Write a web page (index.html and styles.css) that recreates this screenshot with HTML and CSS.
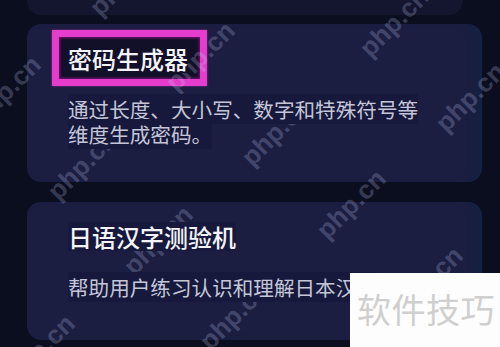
FILE: index.html
```html
<!DOCTYPE html>
<html lang="zh-CN">
<head>
<meta charset="utf-8">
<title>工具列表</title>
<link rel="stylesheet" href="styles.css">
</head>
<body>
<div class="screen">
  <div class="card card-top"></div>
  <div class="card card-first">
    <div class="title title-hl"><span class="tx">密码生成器</span></div>
    <p class="desc"><span class="tx">通过长度、大小写、数字和特殊符号等<br>维度生成密码。</span></p>
  </div>
  <div class="card card-second">
    <div class="title"><span class="tx">日语汉字测验机</span></div>
    <p class="desc"><span class="tx">帮助用户练习认识和理解日本汉字</span></p>
  </div>
  <div class="wm-layer" aria-hidden="true">
    <span class="wm w1">php.cn</span>
    <span class="wm w2">php.cn</span>
    <span class="wm w3">php.cn</span>
    <span class="wm w4">php.cn</span>
    <span class="wm w5">php.cn</span>
    <span class="wm w6">php.cn</span>
    <span class="wm w7">php.cn</span>
    <span class="wm w8">php.cn</span>
    <span class="wm w9">php.cn</span>
    <span class="wm w10">php.cn</span>
    <span class="wm w11">php.cn</span>
    <span class="wm w12">php.cn</span>
    <span class="wm w13">php.cn</span>
  </div>
  <div class="badge">软件技巧</div>
</div>
</body>
</html>
```

FILE: styles.css
```css
* { box-sizing: border-box; }
html, body { margin: 0; padding: 0; }
body {
  background: #0b0e1f;
  font-family: "Noto Sans CJK SC", "Noto Sans", sans-serif;
}
.screen {
  position: relative;
  width: 500px;
  height: 347px;
  overflow: hidden;
  padding: 0 18px 0 27px;
  background: #0b0e1f;
}
.card {
  background: #1b1e41;
  border-radius: 14px;
  box-shadow: inset -10px 0 10px -6px rgba(10, 40, 70, 0.55);
}
.card-top {
  height: 15px;
  width: 436px;
  border-radius: 0 0 14px 14px;
  background: #13162e;
  box-shadow: none;
}
.card-first {
  margin-top: 9px;
  padding: 6px 20px 35px 25px;
}
.card-second {
  margin-top: 20px;
  padding: 6px 20px 40px 25px;
}
.title {
  display: flex;
  align-items: center;
  width: max-content;
  height: 56px;
  padding: 0 12px 0 9px;
  border: 7px solid transparent;
  font-size: 24px;
  font-weight: 500;
  color: #f3f3f8;
}
.title-hl {
  border-color: #e43dcb;
  background: #120f29;
  box-shadow: inset 0 0 3px 1px rgba(130, 20, 120, 0.9), 0 0 2px rgba(228, 61, 203, 0.6);
}
.tx {
  position: relative;
  z-index: 2;
  background: #16193b;
}
.title .tx {
  display: inline-block;
  line-height: 29px;
}
.title-hl .tx { background: #120f29; }
.desc {
  margin: 11px 0 0 16px;
  font-size: 20.6px;
  line-height: 25px;
  color: #c4c6d8;
}
.desc .tx {
  -webkit-box-decoration-break: clone;
  box-decoration-break: clone;
}
.wm-layer {
  position: absolute;
  inset: 0;
  z-index: 1;
  pointer-events: none;
}
.wm {
  position: absolute;
  transform: translate(-50%, -50%) rotate(-45deg);
  font-family: "Liberation Sans", Arial, sans-serif;
  font-weight: bold;
  font-size: 26px;
  line-height: 1;
  white-space: nowrap;
  color: rgba(205, 212, 255, 0.24);
}
.w1 { left: -36px; top: 274px; }
.w2 { left: 158px; top: 240px; }
.w3 { left: 351px; top: 204px; }
.w4 { left: 40px; top: 349px; }
.w5 { left: 234px; top: 315px; }
.w6 { left: 428px; top: 281px; }
.w7 { left: 82px; top: 165px; }
.w8 { left: 276px; top: 131px; }
.w9 { left: 470px; top: 97px; }
.w10 { left: 6px; top: 90px; }
.w11 { left: 200px; top: 56px; }
.w12 { left: 394px; top: 22px; }
.w13 { left: 124px; top: -19px; }
.badge {
  position: absolute;
  left: 350px;
  top: 273px;
  z-index: 3;
  width: 150px;
  height: 74px;
  padding: 0 0 4px 7px;
  display: flex;
  align-items: center;
  background: #fdfdfd;
  color: #cfcfcf;
  font-size: 34px;
  font-weight: 400;
  letter-spacing: 0.5px;
}
```
